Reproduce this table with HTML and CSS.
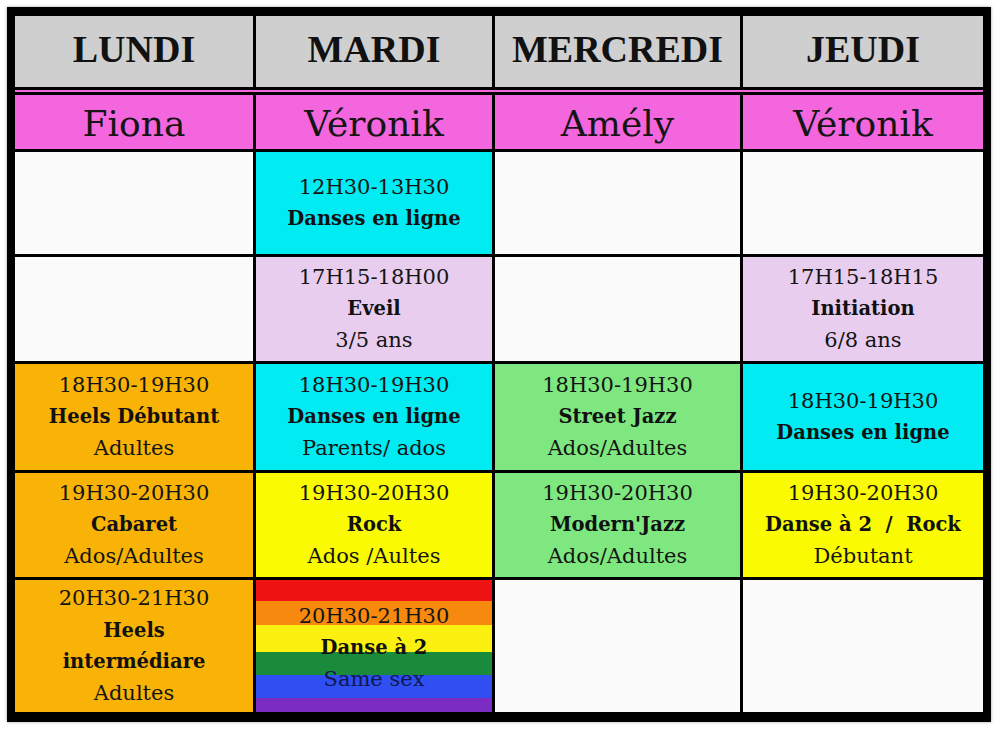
FILE: index.html
```html
<!DOCTYPE html>
<html lang="fr">
<head>
<meta charset="utf-8">
<title>Planning</title>
<link rel="stylesheet" href="styles.css">
</head>
<body>
<div class="frame">
  <div class="grid">
    <div class="day">LUNDI</div>
    <div class="day">MARDI</div>
    <div class="day">MERCREDI</div>
    <div class="day">JEUDI</div>
    <div class="strip"></div>
    <div class="name">Fiona</div>
    <div class="name">Véronik</div>
    <div class="name">Amély</div>
    <div class="name">Véronik</div>

    <div class="cell white"></div>
    <div class="cell cyan"><span>12H30-13H30</span><b>Danses en ligne</b></div>
    <div class="cell white"></div>
    <div class="cell white"></div>

    <div class="cell white"></div>
    <div class="cell lilac"><span>17H15-18H00</span><b>Eveil</b><span>3/5 ans</span></div>
    <div class="cell white"></div>
    <div class="cell lilac"><span>17H15-18H15</span><b>Initiation</b><span>6/8 ans</span></div>

    <div class="cell orange"><span>18H30-19H30</span><b>Heels Débutant</b><span>Adultes</span></div>
    <div class="cell cyan"><span>18H30-19H30</span><b>Danses en ligne</b><span>Parents/ ados</span></div>
    <div class="cell green"><span>18H30-19H30</span><b>Street Jazz</b><span>Ados/Adultes</span></div>
    <div class="cell cyan"><span>18H30-19H30</span><b>Danses en ligne</b></div>

    <div class="cell orange"><span>19H30-20H30</span><b>Cabaret</b><span>Ados/Adultes</span></div>
    <div class="cell yellow"><span>19H30-20H30</span><b>Rock</b><span>Ados /Aultes</span></div>
    <div class="cell green"><span>19H30-20H30</span><b>Modern'Jazz</b><span>Ados/Adultes</span></div>
    <div class="cell yellow"><span>19H30-20H30</span><b>Danse à 2 &nbsp;/&nbsp; Rock</b><span>Débutant</span></div>

    <div class="cell orange"><span>20H30-21H30</span><b>Heels</b><b>intermédiare</b><span>Adultes</span></div>
    <div class="cell rainbow"><span>20H30-21H30</span><b>Danse à 2</b><span class="navy">Same sex</span></div>
    <div class="cell white"></div>
    <div class="cell white"></div>
  </div>
</div>
</body>
</html>
```

FILE: styles.css
```css
html, body {
  margin: 0;
  padding: 0;
  background: #ffffff;
}

body {
  width: 1000px;
  height: 730px;
  overflow: hidden;
  font-family: "DejaVu Serif", serif;
  color: #141414;
}

.frame {
  margin: 7px 0 0 7px;
  width: 968px;
  border-style: solid;
  border-color: #000;
  border-width: 9px 8px 10px 8px;
  background: #000;
  box-shadow: 0 0 3px rgba(0,0,0,0.35);
}

.grid {
  display: grid;
  grid-template-columns: 238px 236px 245px 240px;
  grid-template-rows: 71px 2px 54px 102px 104px 106px 104px 132px;
  gap: 3px;
  background: #000;
}

.day {
  background: #cfcfcf;
  display: flex;
  align-items: center;
  justify-content: center;
  font-family: "Liberation Serif", serif;
  font-weight: bold;
  font-size: 38px;
  color: #111;
  padding-bottom: 5px;
}

.strip {
  grid-column: 1 / -1;
  background: #f268dc;
}

.name {
  background: #f466dd;
  display: flex;
  align-items: center;
  justify-content: center;
  font-size: 36px;
  color: #151515;
  padding-top: 2px;
}

.cell {
  display: flex;
  flex-direction: column;
  align-items: center;
  justify-content: center;
  text-align: center;
  font-size: 21px;
  line-height: 31.5px;
}

.cell b {
  font-weight: bold;
  font-family: "DejaVu Serif", serif;
  font-size: 19.5px;
  color: #111;
}

.white { background: #fafafa; }
.cyan { background: #00ebf2; }
.lilac { background: #e9cdef; }
.orange { background: #f8b306; }
.yellow { background: #fafa02; }
.green { background: #7ee77f; }

.rainbow {
  background: linear-gradient(to bottom,
    #ee1212 0, #ee1212 21px,
    #f6890e 21px, #f6890e 45px,
    #fbf010 45px, #fbf010 72px,
    #1a8a3b 72px, #1a8a3b 95px,
    #2f4ff2 95px, #2f4ff2 118px,
    #7b2cc2 118px, #7b2cc2 132px);
  padding-top: 4px;
  box-sizing: border-box;
}

.navy { color: #101850; }
```
